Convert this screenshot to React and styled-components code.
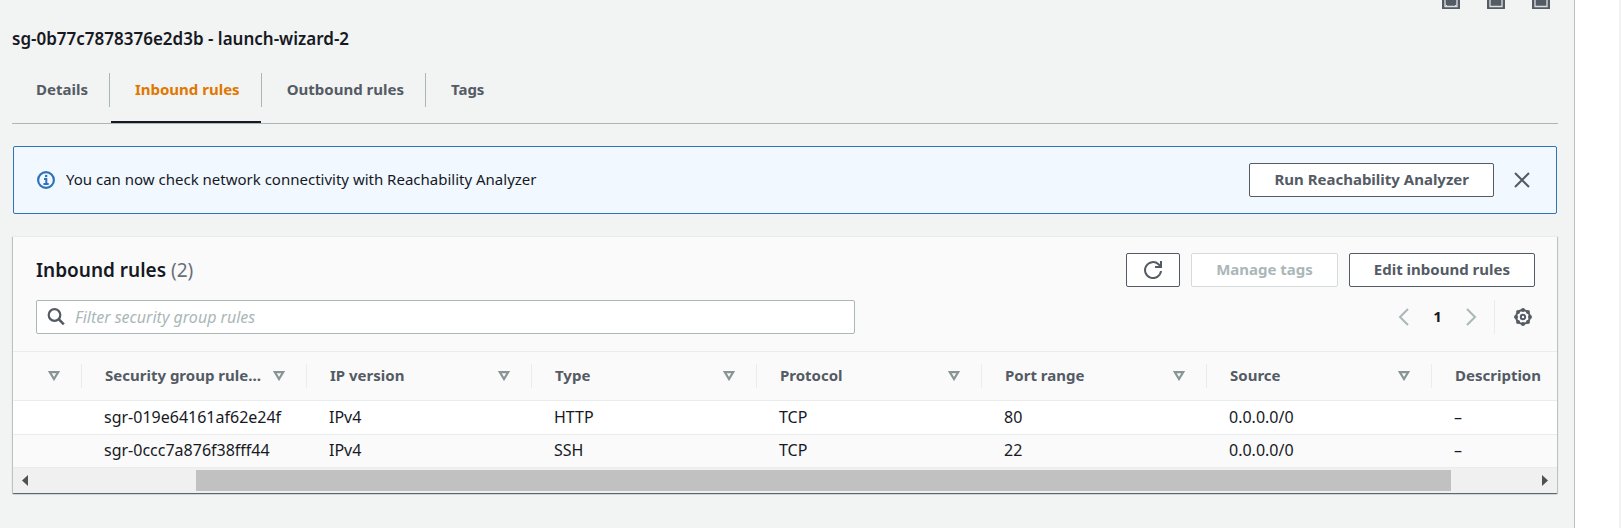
import React from "react";
import styled, { createGlobalStyle } from "styled-components";

const GlobalStyle = createGlobalStyle`
  * { box-sizing: border-box; }
  body {
    margin: 0;
    background: #fff;
    color: #16191f;
    font: 15px/22px "Noto Sans", "Open Sans", sans-serif;
  }
  button, input { font: inherit; }
  svg { display: block; flex: none; }
`;

const Page = styled.div`
  display: flex;
  min-height: 100vh;
`;

const SplitPanel = styled.main`
  flex: 1;
  min-width: 0;
  background: #f2f3f3;
  border-right: 1px solid #bbbfbf;
`;

const Gutter = styled.aside`
  width: 46px;
  background: #fff;
  border-right: 2px solid #f2f2f2;
`;

const PanelToolbar = styled.div`
  display: flex;
  justify-content: flex-end;
  gap: 27px;
  height: 9px;
  padding: 0 24px;
`;

const IconButton = styled.button`
  display: inline-flex;
  align-items: center;
  justify-content: center;
  padding: 0;
  border: 0;
  background: none;
  color: ${(p) => p.$color || "#545b64"};
  cursor: pointer;
`;

const Content = styled.div`
  padding: 19px 16px 34px 12px;
`;

const Title = styled.h2`
  margin: 0;
  font-size: 17px;
  line-height: 22px;
  font-weight: 600;
`;

const TabList = styled.ul`
  display: flex;
  margin: 23px 0 22px;
  padding: 0;
  list-style: none;
  border-bottom: 1px solid #aab7b8;
`;

const TabItem = styled.li`
  display: flex;
  align-items: flex-start;

  &:not(:last-child)::after {
    content: "";
    width: 1px;
    height: 34px;
    margin-right: 1px;
    background: #aab7b8;
  }
`;

const Tab = styled.button`
  height: 50px;
  padding: 0 21px 16px 24px;
  border: 0;
  border-bottom: 2px solid ${(p) => (p.$active ? "#16191f" : "transparent")};
  background: none;
  color: ${(p) => (p.$active ? "#e07700" : "#545b64")};
  font-weight: 700;
  cursor: pointer;
`;

const Alert = styled.section`
  display: flex;
  align-items: center;
  margin: 0 1px 22px;
  padding: 16px 26px 16px 23px;
  border: 1px solid #2e73b8;
  border-radius: 2px;
  background: #f1f8ff;
`;

const AlertText = styled.p`
  flex: 1;
  margin: 0 12px 0 11px;
  padding-bottom: 2px;
`;

const Button = styled.button`
  display: inline-flex;
  align-items: center;
  justify-content: center;
  height: 34px;
  padding: ${(p) => (p.$icon ? "0 17px" : "0 24px 2px")};
  border: 1px solid #545b64;
  border-radius: 2px;
  background: #fff;
  color: #545b64;
  font-weight: 700;
  white-space: nowrap;
  cursor: pointer;

  &:disabled {
    border-color: #d5dbdb;
    color: #aab7b8;
    cursor: default;
  }
`;

const DismissButton = styled(IconButton)`
  margin-left: 20px;
`;

const Card = styled.section`
  margin: 0 1px;
  border-top: 1px solid #eaeded;
  background: #fafafa;
  box-shadow: 0 1px 1px 0 rgba(0, 28, 36, 0.5),
    1px 1px 1px 0 rgba(0, 28, 36, 0.15), -1px 1px 1px 0 rgba(0, 28, 36, 0.15);
`;

const CardHeader = styled.header`
  display: flex;
  align-items: center;
  justify-content: space-between;
  padding: 16px 22px 13px 23px;
`;

const CardTitle = styled.h3`
  margin: 0;
  font-size: 19px;
  line-height: 28px;
  font-weight: 600;
`;

const Count = styled.span`
  color: #687078;
  font-weight: 400;
`;

const Actions = styled.div`
  display: flex;
  gap: 11px;
`;

const FilterRow = styled.div`
  display: flex;
  align-items: center;
  justify-content: space-between;
  padding: 0 25px 17px 23px;
`;

const SearchBox = styled.label`
  display: flex;
  align-items: center;
  gap: 10px;
  flex: 0 1 819px;
  height: 34px;
  padding: 0 10px;
  border: 1px solid #aab7b8;
  border-radius: 2px;
  background: #fff;
  color: #545b64;
`;

const SearchInput = styled.input`
  flex: 1;
  min-width: 0;
  padding: 0;
  border: 0;
  outline: 0;
  background: none;
  color: #16191f;
  font-size: 16px;

  &::placeholder {
    color: #aab7b8;
    font-style: italic;
    opacity: 1;
  }
`;

const Pager = styled.nav`
  display: flex;
  align-items: center;
`;

const PageNumber = styled.button`
  width: 55px;
  padding: 0 0 2px;
  border: 0;
  background: none;
  color: #16191f;
  font-weight: 700;
  cursor: pointer;
`;

const Preferences = styled.div`
  display: flex;
  height: 34px;
  margin-left: 17px;
  padding-left: 19px;
  border-left: 1px solid #eaeded;
`;

const TableWrap = styled.div`
  overflow: hidden;
`;

const Table = styled.table`
  width: 100%;
  table-layout: fixed;
  border-collapse: separate;
  border-spacing: 0;
`;

const Col = styled.col`
  width: ${(p) => (p.$width ? `${p.$width}px` : "auto")};
`;

const HeaderCell = styled.th`
  height: 50px;
  padding: 0;
  border: solid #eaeded;
  border-width: 1px 0;
  color: #545b64;
  font-weight: 700;
  text-align: left;
`;

const HeaderContent = styled.div`
  display: flex;
  align-items: center;
  justify-content: space-between;
  height: 24px;
  padding: 0 21px 0 23px;
  border-right: 1px solid ${(p) => (p.$last ? "transparent" : "#eaeded")};
  white-space: nowrap;
`;

const HeaderLabel = styled.span`
  padding-bottom: 2px;
`;

const Row = styled.tr`
  background: ${(p) => (p.$striped ? "#fafafa" : "#fff")};
`;

const Cell = styled.td`
  height: ${(p) => (p.$lastRow ? 33 : 34)}px;
  padding: 0 0 2px 22px;
  border-bottom: 1px solid #eaeded;
  font-size: 16px;
  line-height: 22px;
  white-space: nowrap;
`;

const ScrollBar = styled.div`
  display: flex;
  align-items: center;
  justify-content: space-between;
  height: 25px;
  padding: 0 9px;
  background: #f0f0f0;
`;

const ScrollTrack = styled.div`
  display: flex;
  flex: 1;
  height: 21px;
  padding: 0 91px 0 168px;
`;

const ScrollThumb = styled.div`
  flex: 1;
  background: #c1c1c1;
`;

const LayoutIcon = ({ round }) => (
  <svg width="18" height="9" viewBox="0 0 18 9">
    <path d="M0 0H18V8.5Q18 9 17.5 9H.5Q0 9 0 8.500Z" fill="currentColor" />
    <path d="M3 0V6.500H15V0" fill="none" stroke="#dcdfe0" strokeWidth="1.300" />
    {round && <path d="M3.500 4.500L5.300 6.300M14.500 4.500L12.700 6.300" stroke="#dcdfe0" />}
  </svg>
);

const InfoIcon = () => (
  <svg width="18" height="18" viewBox="0 0 18 18" fill="none" stroke="#2e73b8">
    <circle cx="9" cy="9" r="7.900" strokeWidth="2.200" />
    <path d="M7 8H9.300V12.500M6.500 13H11.700" strokeWidth="2" />
    <path d="M8 5H10.300" strokeWidth="2.200" />
  </svg>
);

const CloseIcon = () => (
  <svg width="16" height="16" viewBox="0 0 16 16" fill="none" stroke="currentColor" strokeWidth="2">
    <path d="M1 1L15 15M15 1L1 15" />
  </svg>
);

const RefreshIcon = () => (
  <svg width="18" height="18" viewBox="0 0 18 18" fill="none" stroke="currentColor" strokeWidth="2">
    <path d="M17 10A8 8 0 1 1 14.500 3.200L16.500 5.200" />
    <path d="M17 0V6H11" />
  </svg>
);

const SearchIcon = () => (
  <svg width="18" height="18" viewBox="0 0 18 18" fill="none" stroke="currentColor" strokeWidth="2.200">
    <circle cx="7.500" cy="7" r="5.800" />
    <path d="M11.700 11.200L16.800 16.300" strokeWidth="2.600" />
  </svg>
);

const ChevronIcon = ({ next }) => (
  <svg width="12" height="18" viewBox="0 0 12 18" fill="none" stroke="currentColor" strokeWidth="2">
    <path d={next ? "M2 1L10 9L2 17" : "M10 1L2 9L10 17"} />
  </svg>
);

const gearTeeth = Array.from({ length: 8 }, (_, k) => (k * Math.PI) / 4);

const GearIcon = () => (
  <svg width="18" height="18" viewBox="0 0 18 18" fill="none" stroke="currentColor" strokeWidth="2">
    <circle cx="9" cy="9" r="6.900" />
    {gearTeeth.map((angle) => (
      <circle
        key={angle}
        cx={9 + 7 * Math.cos(angle)}
        cy={9 + 7 * Math.sin(angle)}
        r="2"
        fill="currentColor"
        stroke="none"
      />
    ))}
    <circle cx="9" cy="9" r="2.200" />
  </svg>
);

const SortIcon = () => (
  <svg width="12" height="10" viewBox="0 0 12 10" fill="none" stroke="#879596" strokeWidth="2.200">
    <path d="M1.900 1.200H10.100L6 8Z" />
  </svg>
);

const ArrowIcon = ({ right }) => (
  <svg width="6" height="11" viewBox="0 0 6 11" fill="#505050">
    <path d={right ? "M0 0L6 5.500L0 11Z" : "M6 0L0 5.500L6 11Z"} />
  </svg>
);

const tabs = ["Details", "Inbound rules", "Outbound rules", "Tags"];

const columns = [
  { label: "", width: 69, sortable: true },
  { label: "Security group rule…", width: 225, sortable: true },
  { label: "IP version", width: 225, sortable: true },
  { label: "Type", width: 225, sortable: true },
  { label: "Protocol", width: 225, sortable: true },
  { label: "Port range", width: 225, sortable: true },
  { label: "Source", width: 225, sortable: true },
  { label: "Description" },
];

const rules = [
  ["", "sgr-019e64161af62e24f", "IPv4", "HTTP", "TCP", "80", "0.0.0.0/0", "–"],
  ["", "sgr-0ccc7a876f38fff44", "IPv4", "SSH", "TCP", "22", "0.0.0.0/0", "–"],
];

export default function App() {
  return (
    <Page>
      <GlobalStyle />
      <SplitPanel>
        <PanelToolbar>
          <IconButton aria-label="Small panel"><LayoutIcon round /></IconButton>
          <IconButton aria-label="Medium panel"><LayoutIcon /></IconButton>
          <IconButton aria-label="Full panel"><LayoutIcon /></IconButton>
        </PanelToolbar>
        <Content>
          <Title>sg-0b77c7878376e2d3b - launch-wizard-2</Title>
          <TabList role="tablist">
            {tabs.map((tab) => (
              <TabItem key={tab} role="presentation">
                <Tab role="tab" aria-selected={tab === "Inbound rules"} $active={tab === "Inbound rules"}>
                  {tab}
                </Tab>
              </TabItem>
            ))}
          </TabList>
          <Alert>
            <InfoIcon />
            <AlertText>You can now check network connectivity with Reachability Analyzer</AlertText>
            <Button>Run Reachability Analyzer</Button>
            <DismissButton aria-label="Dismiss"><CloseIcon /></DismissButton>
          </Alert>
          <Card>
            <CardHeader>
              <CardTitle>
                Inbound rules <Count>(2)</Count>
              </CardTitle>
              <Actions>
                <Button $icon aria-label="Refresh"><RefreshIcon /></Button>
                <Button disabled>Manage tags</Button>
                <Button>Edit inbound rules</Button>
              </Actions>
            </CardHeader>
            <FilterRow>
              <SearchBox>
                <SearchIcon />
                <SearchInput
                  type="text"
                  aria-label="Filter security group rules"
                  placeholder="Filter security group rules"
                />
              </SearchBox>
              <Pager aria-label="Pagination">
                <IconButton $color="#aab7b8" aria-label="Previous page"><ChevronIcon /></IconButton>
                <PageNumber>1</PageNumber>
                <IconButton $color="#aab7b8" aria-label="Next page"><ChevronIcon next /></IconButton>
                <Preferences>
                  <IconButton aria-label="Preferences"><GearIcon /></IconButton>
                </Preferences>
              </Pager>
            </FilterRow>
            <TableWrap>
              <Table>
                <colgroup>
                  {columns.map((c, i) => <Col key={i} $width={c.width} />)}
                </colgroup>
                <thead>
                  <tr>
                    {columns.map((c, i) => (
                      <HeaderCell key={i} scope="col">
                        <HeaderContent $last={!c.sortable}>
                          <HeaderLabel>{c.label}</HeaderLabel>
                          {c.sortable && (
                            <IconButton aria-label={`Sort ${c.label}`}><SortIcon /></IconButton>
                          )}
                        </HeaderContent>
                      </HeaderCell>
                    ))}
                  </tr>
                </thead>
                <tbody>
                  {rules.map((rule, r) => (
                    <Row key={r} $striped={r % 2 === 1}>
                      {rule.map((value, i) => (
                        <Cell key={i} $lastRow={r === rules.length - 1}>{value}</Cell>
                      ))}
                    </Row>
                  ))}
                </tbody>
              </Table>
            </TableWrap>
            <ScrollBar>
              <IconButton aria-label="Scroll left"><ArrowIcon /></IconButton>
              <ScrollTrack>
                <ScrollThumb />
              </ScrollTrack>
              <IconButton aria-label="Scroll right"><ArrowIcon right /></IconButton>
            </ScrollBar>
          </Card>
        </Content>
      </SplitPanel>
      <Gutter />
    </Page>
  );
}
